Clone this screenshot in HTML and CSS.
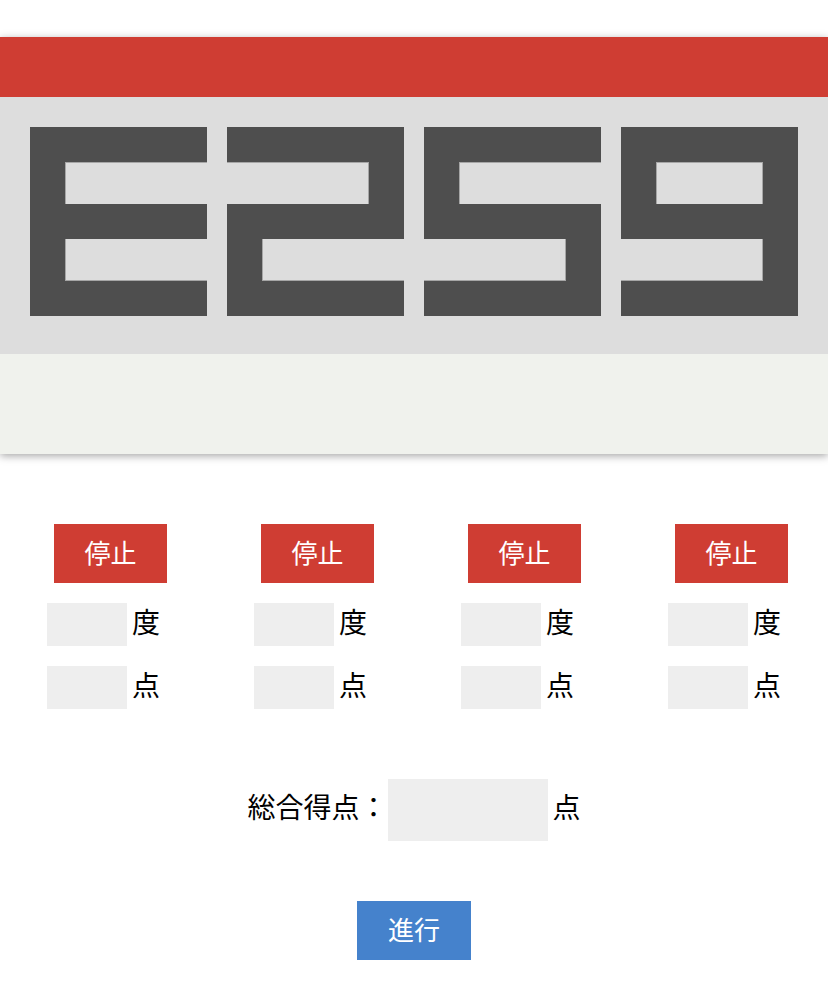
FILE: index.html
```html
<!DOCTYPE html>
<html lang="ja">
<head>
<meta charset="utf-8">
<title>Stop</title>
<link rel="stylesheet" href="styles.css">
</head>
<body>
<div class="card">
  <div class="card-bar"></div>
  <div class="display">
    <svg class="digit" viewBox="0 0 177 189" width="177" height="189">
      <rect x="0" y="0" width="177" height="35"/>
      <rect x="0" y="0" width="35" height="189"/>
      <rect x="0" y="77" width="177" height="35"/>
      <rect x="0" y="154" width="177" height="35"/>
      <path class="edge" d="M35 35.5H177M35.5 35V77M35.5 112V154M35 153.5H177"/>
    </svg>
    <svg class="digit" viewBox="0 0 177 189" width="177" height="189">
      <rect x="0" y="0" width="177" height="35"/>
      <rect x="142" y="0" width="35" height="112"/>
      <rect x="0" y="77" width="177" height="35"/>
      <rect x="0" y="77" width="35" height="112"/>
      <rect x="0" y="154" width="177" height="35"/>
      <path class="edge" d="M0 35.5H142M141.5 35V77M35.5 112V154M35 153.5H177"/>
    </svg>
    <svg class="digit" viewBox="0 0 177 189" width="177" height="189">
      <rect x="0" y="0" width="177" height="35"/>
      <rect x="0" y="0" width="35" height="112"/>
      <rect x="0" y="77" width="177" height="35"/>
      <rect x="142" y="77" width="35" height="112"/>
      <rect x="0" y="154" width="177" height="35"/>
      <path class="edge" d="M35 35.5H177M35.5 35V77M141.5 112V154M0 153.5H142"/>
    </svg>
    <svg class="digit" viewBox="0 0 177 189" width="177" height="189">
      <rect x="0" y="0" width="177" height="35"/>
      <rect x="0" y="0" width="35" height="112"/>
      <rect x="142" y="0" width="35" height="189"/>
      <rect x="0" y="77" width="177" height="35"/>
      <rect x="0" y="154" width="177" height="35"/>
      <path class="edge" d="M35 35.5H142M35.5 35V77M141.5 35V77M141.5 112V154M0 153.5H142"/>
    </svg>
  </div>
  <div class="card-foot"></div>
</div>

<div class="controls">
  <div class="col">
    <button class="btn btn-stop">停止</button>
    <div class="field"><span class="box"></span><span class="unit">度</span></div>
    <div class="field"><span class="box"></span><span class="unit">点</span></div>
  </div>
  <div class="col">
    <button class="btn btn-stop">停止</button>
    <div class="field"><span class="box"></span><span class="unit">度</span></div>
    <div class="field"><span class="box"></span><span class="unit">点</span></div>
  </div>
  <div class="col">
    <button class="btn btn-stop">停止</button>
    <div class="field"><span class="box"></span><span class="unit">度</span></div>
    <div class="field"><span class="box"></span><span class="unit">点</span></div>
  </div>
  <div class="col">
    <button class="btn btn-stop">停止</button>
    <div class="field"><span class="box"></span><span class="unit">度</span></div>
    <div class="field"><span class="box"></span><span class="unit">点</span></div>
  </div>
</div>

<div class="total">
  <span class="total-label">総合得点：</span><span class="total-box"></span><span class="unit">点</span>
</div>

<div class="go">
  <button class="btn btn-go">進行</button>
</div>
</body>
</html>
```

FILE: styles.css
```css
* { box-sizing: border-box; }
html, body {
  margin: 0;
  padding: 0;
  background: #ffffff;
  font-family: "Noto Sans CJK JP", "Noto Sans", sans-serif;
  color: #000;
}
.card {
  margin-top: 37px;
  background: #f0f2ed;
  box-shadow: 0 2px 8px rgba(0,0,0,0.35);
}
.card-bar {
  height: 60px;
  background: #cf3d33;
}
.display {
  background: #dddddd;
  height: 257px;
  padding-top: 30px;
  display: flex;
  justify-content: center;
  gap: 20px;
}
.digit { display: block; fill: #4e4e4e; }
.digit .edge { fill: none; stroke: #a6a6a6; stroke-width: 1; }
.card-foot { height: 100px; }

.controls {
  margin-top: 70px;
  display: grid;
  grid-template-columns: repeat(4, 207px);
}
.col {
  display: flex;
  flex-direction: column;
  align-items: flex-start;
}
.btn {
  border: none;
  color: #fff;
  font-family: "Noto Sans CJK JP", "Noto Sans", sans-serif;
  font-size: 26px;
  line-height: 1;
  padding: 0 0 3px 0;
  cursor: pointer;
}
.btn-stop {
  width: 113px;
  height: 59px;
  margin-left: 54px;
  background: #cf3d33;
}
.field {
  margin-left: 47px;
  margin-top: 20px;
  display: flex;
  align-items: center;
  height: 43px;
}
.box {
  display: block;
  width: 80px;
  height: 43px;
  background: #eeeeee;
}
.unit {
  font-size: 28px;
  line-height: 1;
  margin-left: 5px;
  margin-top: -8px;
}
.total {
  margin-top: 70px;
  display: flex;
  justify-content: center;
  align-items: center;
  height: 62px;
}
.total-label {
  font-size: 28px;
  line-height: 1;
  margin-top: -8px;
}
.total-box {
  display: block;
  width: 160px;
  height: 62px;
  background: #eeeeee;
}
.go {
  margin-top: 60px;
  display: flex;
  justify-content: center;
}
.btn-go {
  width: 114px;
  height: 59px;
  background: #4582cc;
}
```
